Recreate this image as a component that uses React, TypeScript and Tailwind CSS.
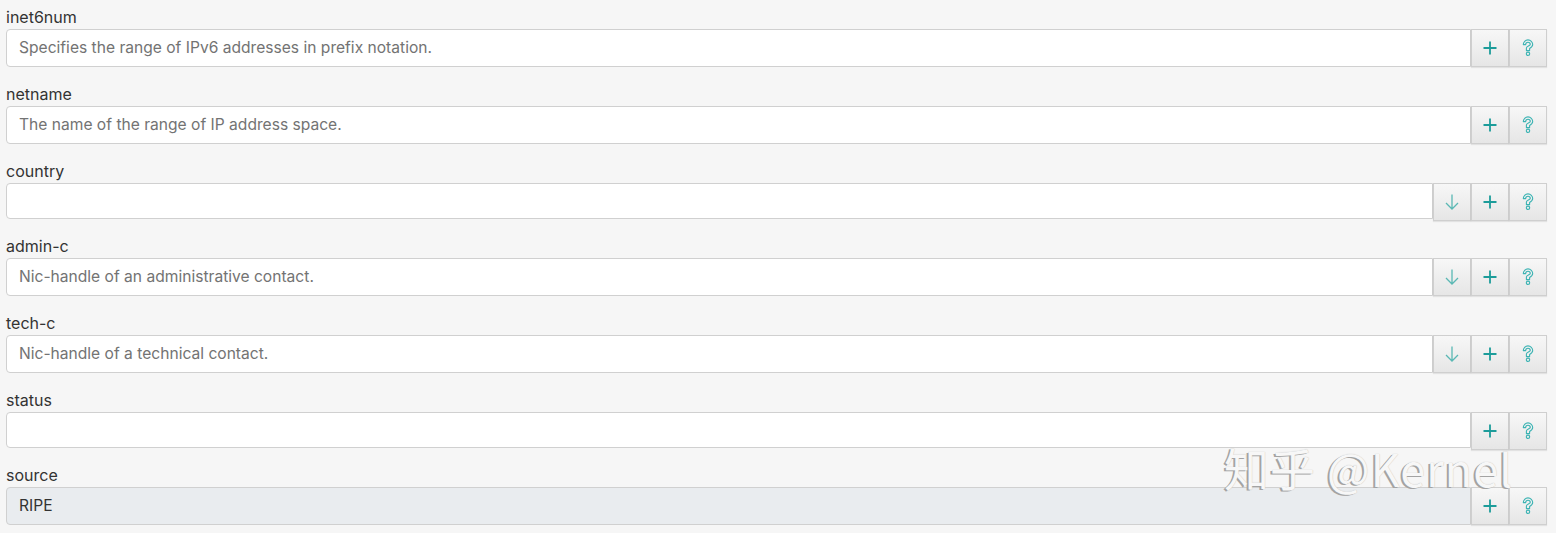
import React from 'react';

type Field = {
  name: string;
  placeholder?: string;
  value?: string;
  lookup?: boolean;
  readOnly?: boolean;
};

const FIELDS: Field[] = [
  { name: 'inet6num', placeholder: 'Specifies the range of IPv6 addresses in prefix notation.' },
  { name: 'netname', placeholder: 'The name of the range of IP address space.' },
  { name: 'country', lookup: true },
  { name: 'admin-c', placeholder: 'Nic-handle of an administrative contact.', lookup: true },
  { name: 'tech-c', placeholder: 'Nic-handle of a technical contact.', lookup: true },
  { name: 'status' },
  { name: 'source', value: 'RIPE', readOnly: true },
];

const PlusIcon = () => (
  <svg width="14" height="14" viewBox="0 0 14 14" fill="none" stroke="#1c9c9a" strokeWidth="1.8">
    <path d="M7 0.5v13M0.5 7h13" />
  </svg>
);

// outlined question mark glyph
const HelpIcon = () => (
  <svg width="12" height="18" viewBox="0 0 12 18" fill="none" stroke="#3bb3b3" strokeWidth="1.1" strokeLinejoin="round">
    <path d="M1.3 5.6A4.7 4.7 0 0 1 10.7 5.6C10.7 7.6 9.2 8.6 7.6 9.4V11.6H4.4V8.9C4.4 8 5.4 7.4 6.4 6.9C7.7 6.4 8.3 6.1 8.3 5.6A2.3 2.3 0 0 0 3.7 5.6Z" />
    <circle cx="6" cy="14.8" r="1.7" />
  </svg>
);

const DownIcon = () => (
  <svg width="14" height="16" viewBox="0 0 14 16" fill="none" stroke="#5ab8b4" strokeWidth="1.3">
    <path d="M7 0.5v14.5M1 9l6 6 6-6" />
  </svg>
);

const AddonButton = ({ children }: { children: React.ReactNode }) => (
  <button
    type="button"
    className="w-[38px] h-[38px] flex items-center justify-center border border-[#cfcfcf] bg-gradient-to-b from-[#f7f7f7] to-[#e6e6e6] shadow-[0_1px_1px_rgba(0,0,0,0.08)]"
  >
    {children}
  </button>
);

const FieldRow = ({ field }: { field: Field }) => {
  const empty = !field.placeholder && !field.value;
  return (
    <div className="mb-[17px]">
      <label className="block h-[20px] leading-[20px] text-[16px] text-[#333] mb-[2px]">{field.name}</label>
      <div className={`flex items-start ${empty ? 'h-[36px]' : 'h-[38px]'}`}>
        <div
          className={`flex-1 h-full flex items-center px-[12px] border border-[#d0d0d0] rounded-l-[4px] text-[15.6px] ${
            field.readOnly ? 'bg-[#e9ecef] text-[#333]' : 'bg-white text-[#737373]'
          }`}
        >
          {field.value ?? field.placeholder ?? ''}
        </div>
        {field.lookup && (
          <AddonButton>
            <DownIcon />
          </AddonButton>
        )}
        <AddonButton>
          <PlusIcon />
        </AddonButton>
        <AddonButton>
          <HelpIcon />
        </AddonButton>
      </div>
    </div>
  );
};

export default function App() {
  return (
    <div
      className="relative w-[1556px] h-[533px] overflow-hidden bg-[#f6f6f6] pl-[6px] pr-[9px] pt-[7px]"
      style={{ fontFamily: 'Inter, "Noto Sans", sans-serif' }}
    >
      {FIELDS.map((f) => (
        <FieldRow key={f.name} field={f} />
      ))}
      {/* watermark */}
      <div
        className="absolute left-[1224px] top-[438px] text-[45px] leading-[60px] tracking-[1px] text-[#f7f7f7] [text-shadow:_-2px_1px_0_#a3a3a3,_0_0_1px_#b5b5b5] pointer-events-none whitespace-nowrap"
        style={{ fontFamily: '"Noto Sans CJK SC", "Noto Sans", sans-serif' }}
      >
        知乎 @Kernel
      </div>
    </div>
  );
}
